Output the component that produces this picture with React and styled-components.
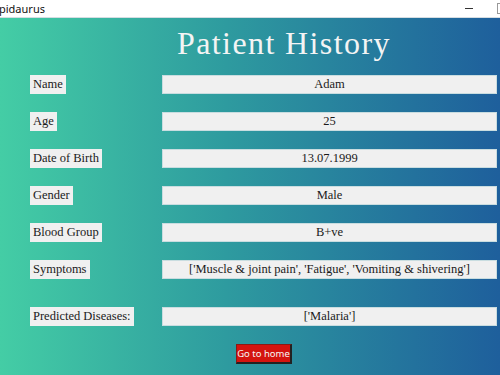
import React from 'react';
import styled, { createGlobalStyle } from 'styled-components';

const GlobalStyle = createGlobalStyle`
  html, body {
    margin: 0;
    padding: 0;
    width: 500px;
    height: 375px;
    overflow: hidden;
  }
`;

const Window = styled.div`
  width: 500px;
  height: 375px;
  display: flex;
  flex-direction: column;
  overflow: hidden;
`;

const TitleBar = styled.div`
  height: 17px;
  background: #ffffff;
  border-bottom: 1px solid #d5dde2;
  display: flex;
  align-items: center;
  justify-content: space-between;
  font-family: "Noto Sans", "Open Sans", sans-serif;
  font-size: 11px;
  color: #111;
`;

const AppName = styled.span`
  margin-left: -1px;
  line-height: 17px;
`;

const WinButtons = styled.div`
  display: flex;
  align-items: center;
  gap: 24px;
  margin-right: -8px;
`;

const MinIcon = styled.span`
  width: 8px;
  height: 1px;
  background: #333;
`;

const MaxIcon = styled.span`
  width: 9px;
  height: 9px;
  border: 1px solid #999;
`;

const Main = styled.div`
  flex: 1;
  background: linear-gradient(90deg, #44cda5 0%, #2e9b9f 45%, #1e5f9c 100%);
  display: flex;
  flex-direction: column;
`;

const Heading = styled.h1`
  margin: 6px 0 0 177px;
  font-family: "Liberation Serif", serif;
  font-weight: normal;
  font-size: 32px;
  line-height: 38px;
  color: #f4f4f4;
  letter-spacing: 1.4px;
`;

const Table = styled.div`
  display: grid;
  grid-template-columns: 132px 335px;
  row-gap: 18px;
  margin: 13px 0 0 30px;
`;

const Label = styled.div`
  justify-self: start;
  height: 19px;
  padding: 0 3px;
  background: #f0f0f0;
  font-family: "Liberation Serif", serif;
  font-size: 12.5px;
  line-height: 19px;
  color: #1a1a1a;
  margin-top: ${(p) => (p.$gap ? '10px' : '0')};
`;

const Value = styled.div`
  height: 17px;
  background: #f0f0f0;
  border: 1px solid #c9dde0;
  text-align: center;
  font-family: "Liberation Serif", serif;
  font-size: 12.5px;
  line-height: 17px;
  color: #1a1a1a;
  margin-top: ${(p) => (p.$gap ? '10px' : '0')};
`;

const HomeButton = styled.button`
  align-self: flex-start;
  margin: 18px 0 0 236px;
  width: 56px;
  height: 20px;
  padding: 0;
  background: #d4140f;
  border: 1px solid #8a1a14;
  border-right: 2px solid #222;
  border-bottom: 2px solid #222;
  color: #f6f6f6;
  font-family: "Noto Sans", "Open Sans", sans-serif;
  font-size: 9.5px;
  line-height: 16px;
  white-space: nowrap;
  cursor: pointer;
`;

const rows = [
  ['Name', 'Adam'],
  ['Age', '25'],
  ['Date of Birth', '13.07.1999'],
  ['Gender', 'Male'],
  ['Blood Group', 'B+ve'],
  ['Symptoms', "['Muscle & joint pain', 'Fatigue', 'Vomiting & shivering']"],
  ['Predicted Diseases:', "['Malaria']", true],
];

const App = () => (
  <Window>
    <GlobalStyle />
    <TitleBar>
      <AppName>pidaurus</AppName>
      <WinButtons>
        <MinIcon />
        <MaxIcon />
      </WinButtons>
    </TitleBar>
    <Main>
      <Heading>Patient History</Heading>
      <Table>
        {rows.map(([label, value, gap]) => (
          <React.Fragment key={label}>
            <Label $gap={gap}>{label}</Label>
            <Value $gap={gap}>{value}</Value>
          </React.Fragment>
        ))}
      </Table>
      <HomeButton type="button">Go to home</HomeButton>
    </Main>
  </Window>
);

export default App;
